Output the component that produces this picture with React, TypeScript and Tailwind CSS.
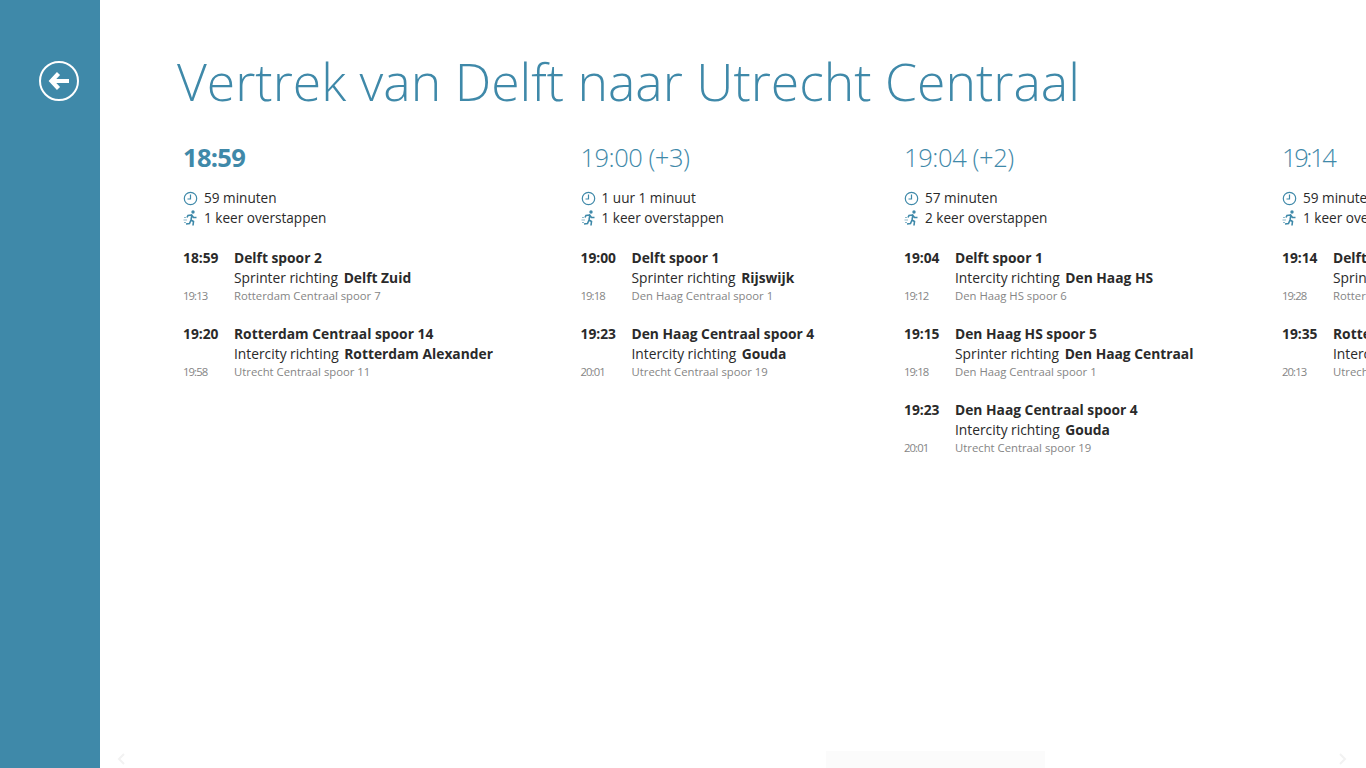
type Leg = {
  dep: string;
  from: string;
  type: string;
  dir: string;
  arr: string;
  to: string;
};

type Trip = {
  time: string;
  width: string;
  timeClass: string;
  duration: string;
  transfers: string;
  legs: Leg[];
};

const trips: Trip[] = [
  {
    time: "18:59",
    width: "w-[397.5px]",
    timeClass: "font-bold tracking-[-0.7px]",
    duration: "59 minuten",
    transfers: "1 keer overstappen",
    legs: [
      { dep: "18:59", from: "Delft spoor 2", type: "Sprinter richting", dir: "Delft Zuid", arr: "19:13", to: "Rotterdam Centraal spoor 7" },
      { dep: "19:20", from: "Rotterdam Centraal spoor 14", type: "Intercity richting", dir: "Rotterdam Alexander", arr: "19:58", to: "Utrecht Centraal spoor 11" },
    ],
  },
  {
    time: "19:00 (+3)",
    width: "w-[323.5px]",
    timeClass: "font-light tracking-[-0.5px]",
    duration: "1 uur 1 minuut",
    transfers: "1 keer overstappen",
    legs: [
      { dep: "19:00", from: "Delft spoor 1", type: "Sprinter richting", dir: "Rijswijk", arr: "19:18", to: "Den Haag Centraal spoor 1" },
      { dep: "19:23", from: "Den Haag Centraal spoor 4", type: "Intercity richting", dir: "Gouda", arr: "20:01", to: "Utrecht Centraal spoor 19" },
    ],
  },
  {
    time: "19:04 (+2)",
    width: "w-[378px]",
    timeClass: "font-light tracking-[-0.4px]",
    duration: "57 minuten",
    transfers: "2 keer overstappen",
    legs: [
      { dep: "19:04", from: "Delft spoor 1", type: "Intercity richting", dir: "Den Haag HS", arr: "19:12", to: "Den Haag HS spoor 6" },
      { dep: "19:15", from: "Den Haag HS spoor 5", type: "Sprinter richting", dir: "Den Haag Centraal", arr: "19:18", to: "Den Haag Centraal spoor 1" },
      { dep: "19:23", from: "Den Haag Centraal spoor 4", type: "Intercity richting", dir: "Gouda", arr: "20:01", to: "Utrecht Centraal spoor 19" },
    ],
  },
  {
    time: "19:14",
    width: "w-[300px]",
    timeClass: "font-light tracking-[-2.4px]",
    duration: "59 minuten",
    transfers: "1 keer overstappen",
    legs: [
      { dep: "19:14", from: "Delft spoor 1", type: "Sprinter richting", dir: "Delft Zuid", arr: "19:28", to: "Rotterdam Centraal spoor 7" },
      { dep: "19:35", from: "Rotterdam Centraal spoor 14", type: "Intercity richting", dir: "Rotterdam Alexander", arr: "20:13", to: "Utrecht Centraal spoor 11" },
    ],
  },
];

function ClockIcon() {
  return (
    <svg width="15" height="15" viewBox="0 0 15 15" fill="none" stroke="#3f89a9" strokeWidth="1.2">
      <circle cx="7.5" cy="7.5" r="6.2" />
      <path d="M7.5 3.5V8H4.5" />
    </svg>
  );
}

function RunnerIcon() {
  return (
    <svg width="15" height="16" viewBox="0 0 15 16" fill="none" stroke="#3f89a9" strokeWidth="1.6">
      <circle cx="10" cy="2" r="1.7" fill="#3f89a9" stroke="none" />
      <path d="M9 4.5L8 10M8.8 5L5 5.5L4 7.5M9 5.5L10.5 7.5L13.5 7.5M8 10L10.5 11.5L10 15.5M8 10L6.5 13.5L3 14" />
      <path d="M1 7.5H3M0.5 10H4M1 12.5H3" strokeWidth="0.6" />
    </svg>
  );
}

function TripColumn({ trip }: { trip: Trip }) {
  return (
    <div className={`${trip.width} shrink-0`}>
      <div className={`h-[32px] text-[25.5px] leading-[32px] text-[#3f89a9] ${trip.timeClass}`}>{trip.time}</div>
      <div className="mt-[15px] text-[13.6px] leading-[20px] text-[#2a2a2a]">
        <div className="flex items-center gap-[6px]">
          <ClockIcon />
          <span>{trip.duration}</span>
        </div>
        <div className="flex items-center gap-[6px]">
          <RunnerIcon />
          <span>{trip.transfers}</span>
        </div>
      </div>
      <div className="mt-[20px] flex flex-col gap-[20px]">
        {trip.legs.map((leg) => (
          <div key={leg.dep} className="grid grid-cols-[51px_1fr] text-[13.8px] leading-[20px] text-[#2a2a2a]">
            <span className="font-bold">{leg.dep}</span>
            <span className="font-bold whitespace-nowrap">{leg.from}</span>
            <span />
            <span className="whitespace-nowrap">
              {leg.type} <span className="ml-[2px] font-bold">{leg.dir}</span>
            </span>
            <span className="text-[11.3px] leading-[16px] tracking-[-0.9px] text-[#858585]">{leg.arr}</span>
            <span className="text-[11.3px] leading-[16px] whitespace-nowrap text-[#858585]">{leg.to}</span>
          </div>
        ))}
      </div>
    </div>
  );
}

export default function App() {
  return (
    <div className="relative flex h-[768px] w-[1366px] overflow-hidden bg-white font-['Open_Sans',sans-serif]">
      <aside className="flex w-[100px] shrink-0 justify-center bg-[#3f89a9] pt-[61px] pl-[18px]">
        <div className="flex h-[40px] w-[40px] items-center justify-center rounded-full border-2 border-white">
          <svg width="24" height="20" viewBox="0 0 24 20" fill="none" stroke="#fff">
            <path d="M6 10H22" strokeWidth="4" />
            <path d="M11.5 2.5L4.5 10L11.5 17.5" strokeWidth="4.2" />
          </svg>
        </div>
      </aside>
      <main className="flex min-w-0 flex-1 flex-col pt-[42px]">
        <h1 className="ml-[77px] text-[51.7px] leading-[78px] font-light whitespace-nowrap text-[#3f89a9]">
          Vertrek van Delft naar Utrecht Centraal
        </h1>
        <div className="mt-[21px] ml-[83px] flex">
          {trips.map((trip) => (
            <TripColumn key={trip.time} trip={trip} />
          ))}
        </div>
      </main>
      <svg className="absolute bottom-[3px] left-[116px]" width="10" height="12" viewBox="0 0 10 12" fill="none" stroke="#f2f2f2" strokeWidth="2">
        <path d="M8 1L3 6L8 11" />
      </svg>
      <svg className="absolute right-[18px] bottom-[3px]" width="10" height="12" viewBox="0 0 10 12" fill="none" stroke="#f2f2f2" strokeWidth="2">
        <path d="M2 1L7 6L2 11" />
      </svg>
      <div className="absolute bottom-0 left-[826px] h-[17px] w-[219px] bg-[#fbfbfb]" />
    </div>
  );
}
